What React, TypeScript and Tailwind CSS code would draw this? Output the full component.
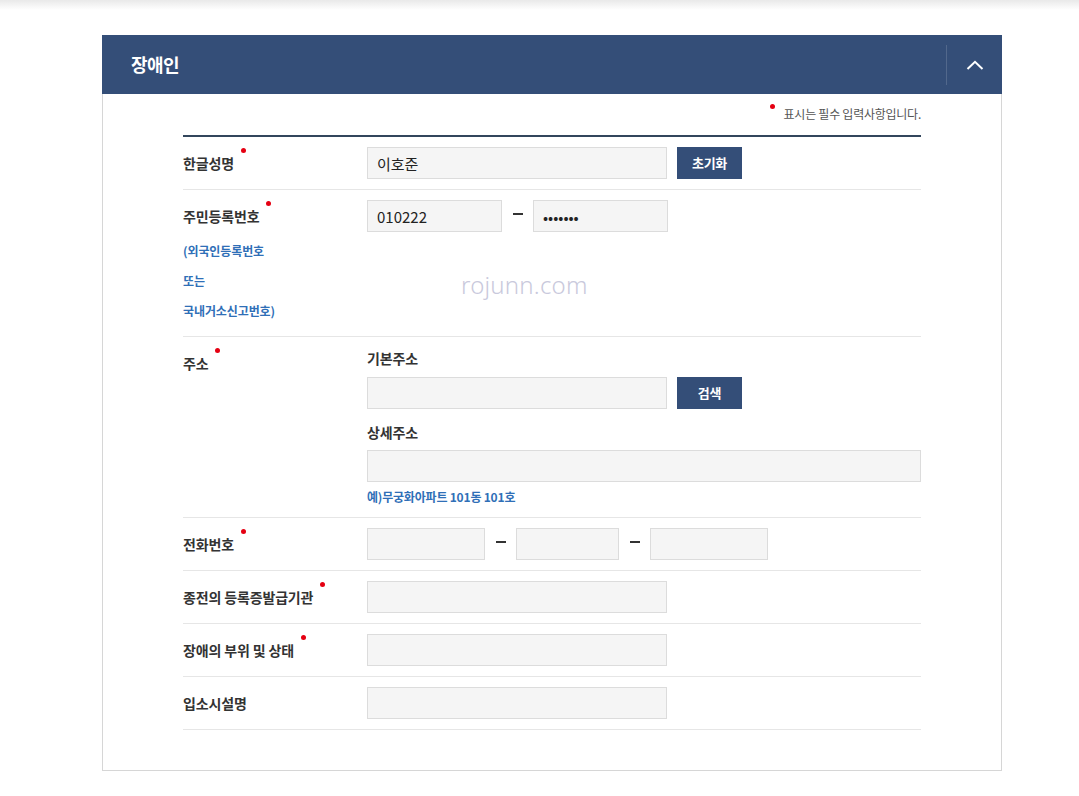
import React from "react";

const NAVY = "bg-[#344e78]";

function Dot() {
  return <span className="absolute -right-[12px] top-[1px] h-[5px] w-[5px] rounded-full bg-[#e50012]" />;
}

function Label({ text, required = true }: { text: string; required?: boolean }) {
  return (
    <span className="relative inline-block text-[14px] font-bold leading-[32px] tracking-[-0.15px] text-[#333]">
      {text}
      {required && <Dot />}
    </span>
  );
}

function Field({ w, value, type = "text" }: { w: string; value?: string; type?: string }) {
  return (
    <input
      type={type}
      readOnly
      defaultValue={value}
      className={`${w} h-[32px] border border-[#dcdcdc] bg-[#f5f5f5] px-[9px] text-[15px] text-[#222] outline-none`}
    />
  );
}

function Btn({ children }: { children: React.ReactNode }) {
  return (
    <button className={`ml-[10px] h-[32px] w-[65px] ${NAVY} text-[13px] font-bold tracking-[-0.3px] text-white`}>
      {children}
    </button>
  );
}

function Dash() {
  return (
    <span className="flex w-[31px] shrink-0 justify-center pb-[4px]">
      <span className="h-[2px] w-[10px] bg-[#333]" />
    </span>
  );
}

function Row({ label, required = true, children, sub }: {
  label: string;
  required?: boolean;
  children: React.ReactNode;
  sub?: React.ReactNode;
}) {
  return (
    <div className="flex border-b border-[#e6e6e6] py-[10px]">
      <div className="w-[184px] shrink-0">
        <Label text={label} required={required} />
        {sub}
      </div>
      <div className="flex-1">{children}</div>
    </div>
  );
}

export default function App() {
  return (
    <div className="relative min-h-[796px] bg-white font-['Noto_Sans_CJK_KR','Noto_Sans',sans-serif]">
      <div className="h-[10px] bg-gradient-to-b from-[#e9e9e9] to-white" />

      <section className="ml-[102px] mt-[25px] w-[900px]">
        <header className={`flex h-[59px] items-center ${NAVY}`}>
          <h2 className="flex-1 pl-[29px] text-[18px] font-bold tracking-[-0.5px] text-white">장애인</h2>
          <div className="flex h-[40px] w-[56px] items-center justify-center border-l border-white/15">
            <svg width="18" height="10" viewBox="0 0 18 10" fill="none">
              <polyline points="1.5,9 9,1.8 16.5,9" stroke="white" strokeWidth="2" />
            </svg>
          </div>
        </header>

        <div className="border-x border-b border-[#d6d6d6] px-[80px] pb-[40px] pt-[10px]">
          <div className="mb-[11px] flex h-[20px] items-start justify-end">
            <span className="mr-[9px] h-[5px] w-[5px] rounded-full bg-[#e50012]" />
            <span className="text-[12px] leading-[20px] tracking-[-0.25px] text-[#555]">표시는 필수 입력사항입니다.</span>
          </div>

          <div className="border-t-2 border-[#33465c]">
            <Row label="한글성명">
              <div className="flex items-center">
                <Field w="w-[300px]" value="이호준" />
                <Btn>초기화</Btn>
              </div>
            </Row>

            <Row
              label="주민등록번호"
              sub={
                <div className="mt-[4px] text-[12px] font-bold leading-[30px] tracking-[-0.1px] text-[#2f6fb7]">
                  <div>(외국인등록번호</div>
                  <div>또는</div>
                  <div>국내거소신고번호)</div>
                </div>
              }
            >
              <div className="flex items-center">
                <Field w="w-[135px]" value="010222" />
                <Dash />
                <Field w="w-[135px]" value="1234567" type="password" />
              </div>
            </Row>

            <Row label="주소">
              <div className="text-[14px] font-bold leading-[22px] tracking-[-0.15px] text-[#333]">기본주소</div>
              <div className="mt-[8px] flex items-center">
                <Field w="w-[300px]" />
                <Btn>검색</Btn>
              </div>
              <div className="mt-[12px] text-[14px] font-bold leading-[22px] tracking-[-0.15px] text-[#333]">상세주소</div>
              <div className="mt-[7px]">
                <Field w="w-full" />
              </div>
              <div className="mt-[5px] text-[12px] font-bold leading-[20px] tracking-[-0.2px] text-[#2f6fb7]">
                예)무궁화아파트 101동 101호
              </div>
            </Row>

            <Row label="전화번호">
              <div className="flex items-center">
                <Field w="w-[118px]" />
                <Dash />
                <Field w="w-[103px]" />
                <Dash />
                <Field w="w-[118px]" />
              </div>
            </Row>

            <Row label="종전의 등록증발급기관">
              <Field w="w-[300px]" />
            </Row>

            <Row label="장애의 부위 및 상태">
              <Field w="w-[300px]" />
            </Row>

            <Row label="입소시설명" required={false}>
              <Field w="w-[300px]" />
            </Row>
          </div>
        </div>
      </section>

      <div className="pointer-events-none absolute left-[461px] top-[267px] text-[24px] font-light tracking-[0.2px] text-[#c9c9dc] font-['Noto_Sans',sans-serif]">
        rojunn.com
      </div>
    </div>
  );
}
